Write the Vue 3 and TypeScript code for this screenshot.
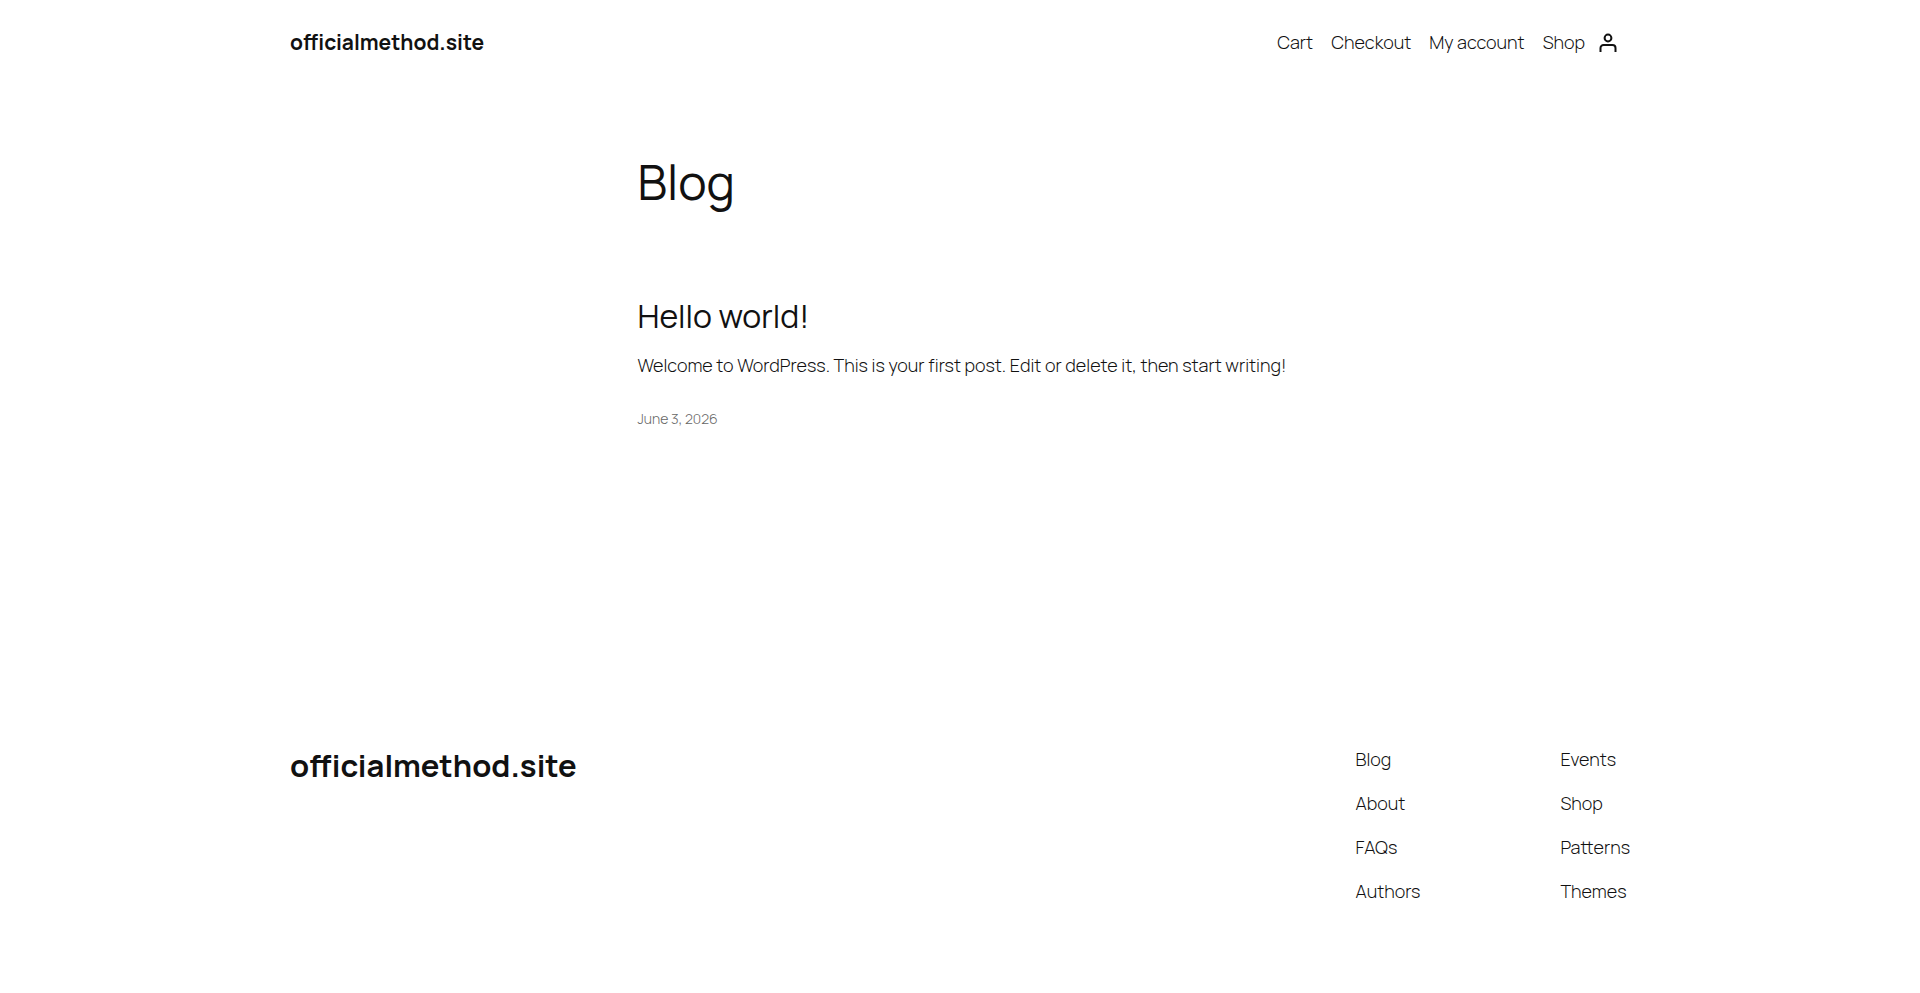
<script setup lang="ts">
interface FooterColumn { label: string; links: string[] }

const siteName: string = 'officialmethod.site'
const pages: string[] = ['Cart', 'Checkout', 'My account', 'Shop']
const columns: FooterColumn[] = [
  { label: 'About the site', links: ['Blog', 'About', 'FAQs', 'Authors'] },
  { label: 'More', links: ['Events', 'Shop', 'Patterns', 'Themes'] },
]
</script>

<template>
  <div class="site">
    <header class="header wide">
      <a class="brand" href="#">{{ siteName }}</a>
      <div class="header-end">
        <nav class="nav" aria-label="Pages">
          <a v-for="page in pages" :key="page" href="#">{{ page }}</a>
        </nav>
        <a class="account" href="#" aria-label="Login">
          <svg viewBox="0 0 18 20" width="18" height="20" fill="none" stroke="currentColor" stroke-width="2" aria-hidden="true">
            <circle cx="9" cy="5" r="3.4" />
            <path d="M1.5 19v-4a3 3 0 0 1 3-3h9a3 3 0 0 1 3 3v4" />
          </svg>
        </a>
      </div>
    </header>
    <main class="content">
      <h1>Blog</h1>
      <article>
        <h2><a href="#">Hello world!</a></h2>
        <p>Welcome to WordPress. This is your first post. Edit or delete it, then start writing!</p>
        <a class="date" href="#"><time datetime="2026-06-03">June 3, 2026</time></a>
      </article>
    </main>
    <footer class="footer wide">
      <h2 class="footer-brand"><a href="#">{{ siteName }}</a></h2>
      <div class="columns">
        <nav v-for="column in columns" :key="column.label" :aria-label="column.label">
          <a v-for="link in column.links" :key="link" href="#">{{ link }}</a>
        </nav>
      </div>
    </footer>
  </div>
</template>

<style>
body { margin: 0; background: #fff; }
</style>

<style scoped>
.site {
  color: #111;
  font-family: Manrope, Inter, "Open Sans", sans-serif;
  font-size: 18px;
  font-weight: 300;
  line-height: 25px;
}
a { color: inherit; text-decoration: none; }
h1, h2, p { margin: 0; font-weight: 400; }
.wide { box-sizing: border-box; max-width: 1340px; margin: 0 auto; }
.header { display: flex; align-items: center; justify-content: space-between; padding: 30px 0; }
.brand { font-size: 21px; font-weight: 700; }
.header-end { display: flex; align-items: center; gap: 14px; }
.nav { display: flex; gap: 18px; }
.account { display: flex; padding-right: 13px; }
.content { max-width: 645px; margin: 0 auto; padding-top: 67px; }
h1 { font-size: 48px; line-height: 60px; }
article { margin-top: 84px; }
article h2 { font-size: 32px; line-height: 40px; }
article p { margin: 17px -12px 0 0; font-weight: 300; }
.date { display: block; margin-top: 28px; color: #666; font-size: 14px; }
.footer { display: flex; justify-content: space-between; padding: 316px 0 80px; }
.footer-brand { font-size: 31px; font-weight: 700; line-height: 36px; }
.columns { display: flex; gap: 140px; }
.columns nav { display: flex; flex-direction: column; gap: 19px; }
</style>
